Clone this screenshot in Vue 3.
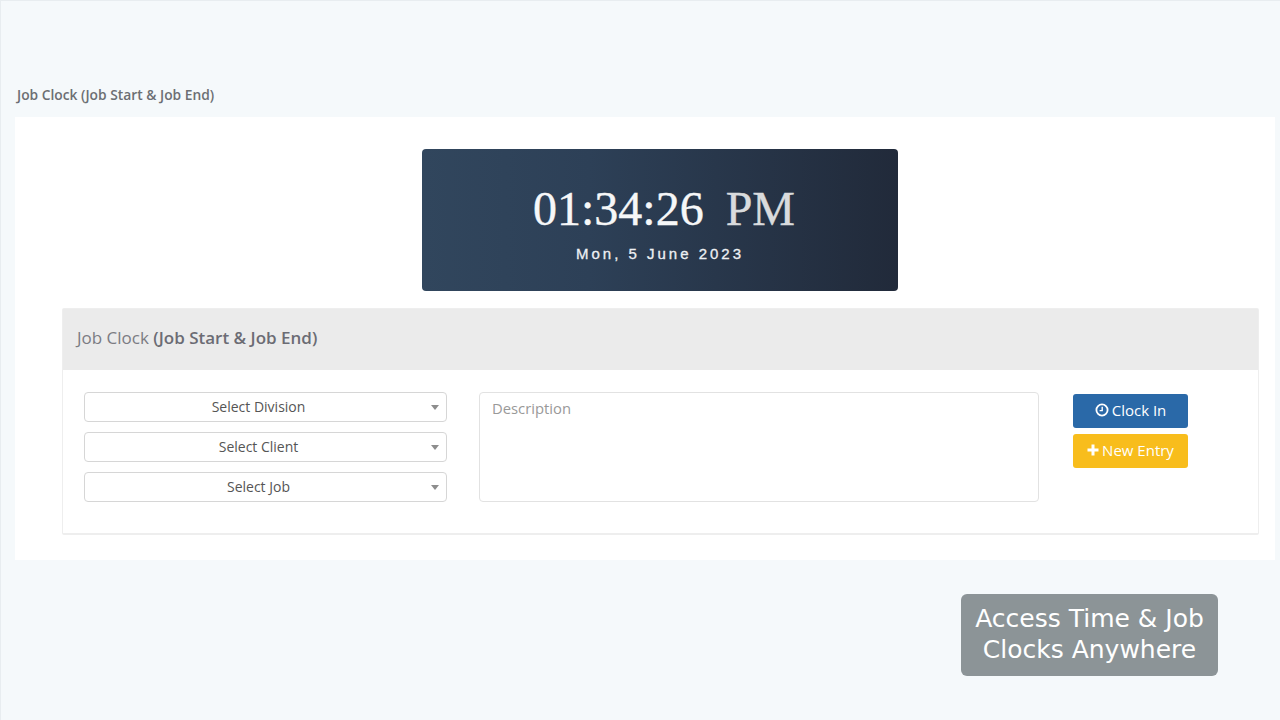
<script setup>
const selects = ['Select Division', 'Select Client', 'Select Job']
</script>

<template>
  <div class="page">
    <h2 class="page-title">Job Clock (Job Start &amp; Job End)</h2>
    <section class="content">
      <div class="clock">
        <div class="time">01:34:26<span class="ampm">PM</span></div>
        <div class="date">Mon, 5 June 2023</div>
      </div>
      <div class="panel">
        <div class="panel-head">Job Clock <b>(Job Start &amp; Job End)</b></div>
        <div class="panel-body">
          <div class="selects">
            <div v-for="s in selects" :key="s" class="select">
              <span>{{ s }}</span>
              <i class="caret"></i>
            </div>
          </div>
          <div class="description">Description</div>
          <div class="buttons">
            <div class="btn blue">
              <svg width="14" height="14" viewBox="0 0 14 14" fill="none" stroke="currentColor">
                <circle cx="7" cy="7" r="5.6" stroke-width="1.8" />
                <path d="M7.2 3.8V7.6H4.6" stroke-width="1.4" />
              </svg>
              Clock In
            </div>
            <div class="btn yellow">
              <svg width="12" height="12" viewBox="0 0 12 12" fill="currentColor">
                <path d="M4.5 0.5h3v4h4v3h-4v4h-3v-4h-4v-3h4z" />
              </svg>
              New Entry
            </div>
          </div>
        </div>
      </div>
    </section>
    <div class="caption">Access Time &amp; Job<br />Clocks Anywhere</div>
  </div>
</template>

<style scoped>
.page {
  position: relative;
  height: 720px;
  box-sizing: border-box;
  padding: 85px 5px 0 14px;
  background: #f5f9fb;
  border-left: 1px solid #e8edf0;
  border-top: 1px solid #e8edf0;
  font-family: "Open Sans", sans-serif;
  overflow: hidden;
}

.page-title {
  margin: 0 0 14px 2px;
  font-size: 13.8px;
  line-height: 17px;
  font-weight: 600;
  color: #6c6f73;
}

.content {
  background: #fff;
  height: 443px;
  box-sizing: border-box;
  padding: 32px 16px 0 47px;
}

.clock {
  width: 476px;
  height: 142px;
  box-sizing: border-box;
  margin: 0 0 17px 360px;
  padding-top: 32px;
  border-radius: 4px;
  background: linear-gradient(90deg, #31465d 0%, #2d4057 35%, #212a3a 100%);
  text-align: center;
  color: #fff;
}

.time {
  font-family: "Liberation Serif", serif;
  font-size: 48px;
  line-height: 55px;
  color: #f6f7f8;
  padding-left: 8px;
  -webkit-text-stroke: 0.4px currentColor;
}

.ampm {
  margin-left: 22px;
  color: #d9dbdd;
}

.date {
  margin-top: 9px;
  font-family: "Liberation Sans", sans-serif;
  font-size: 15px;
  line-height: 18px;
  letter-spacing: 3px;
  color: #eef0f3;
  -webkit-text-stroke: 0.3px currentColor;
}

.panel {
  height: 227px;
  box-sizing: border-box;
  border: 1px solid #eeeeee;
  border-bottom-width: 2px;
  border-radius: 2px;
  background: #fff;
}

.panel-head {
  height: 61px;
  padding-left: 14px;
  background: #ebebeb;
  font-size: 17px;
  line-height: 57px;
  color: #7b7c83;
}

.panel-head b {
  font-weight: 600;
  color: #6b6c74;
}

.panel-body {
  display: flex;
  align-items: flex-start;
  padding: 22px 0 0 21px;
}

.selects {
  display: flex;
  flex-direction: column;
  gap: 10px;
  width: 363px;
}

.select {
  position: relative;
  height: 30px;
  box-sizing: border-box;
  border: 1px solid #d6d6d6;
  border-radius: 4px;
  padding-right: 14px;
  text-align: center;
  font-size: 14px;
  line-height: 28px;
  color: #555;
}

.caret {
  position: absolute;
  right: 7px;
  top: 12px;
  border-left: 4px solid transparent;
  border-right: 4px solid transparent;
  border-top: 5px solid #8d8d8d;
}

.description {
  width: 560px;
  height: 110px;
  box-sizing: border-box;
  margin-left: 32px;
  padding: 5px 12px;
  border: 1px solid #e2e2e2;
  border-radius: 4px;
  font-size: 14.8px;
  line-height: 20px;
  color: #999;
}

.buttons {
  display: flex;
  flex-direction: column;
  gap: 6px;
  width: 115px;
  margin: 2px 0 0 34px;
}

.btn {
  display: flex;
  align-items: center;
  justify-content: center;
  gap: 3px;
  height: 34px;
  box-sizing: border-box;
  padding-bottom: 2px;
  border-radius: 3px;
  font-size: 15px;
  color: #fff;
}

.blue {
  background: #2a69a8;
}

.yellow {
  background: #f8bd1c;
}

.caption {
  position: absolute;
  left: 960px;
  top: 593px;
  width: 257px;
  height: 82px;
  box-sizing: border-box;
  padding-top: 9px;
  border-radius: 6px;
  background: #8c9497;
  text-align: center;
  font-family: "DejaVu Sans", sans-serif;
  font-size: 25px;
  line-height: 31px;
  color: #fff;
}
</style>
